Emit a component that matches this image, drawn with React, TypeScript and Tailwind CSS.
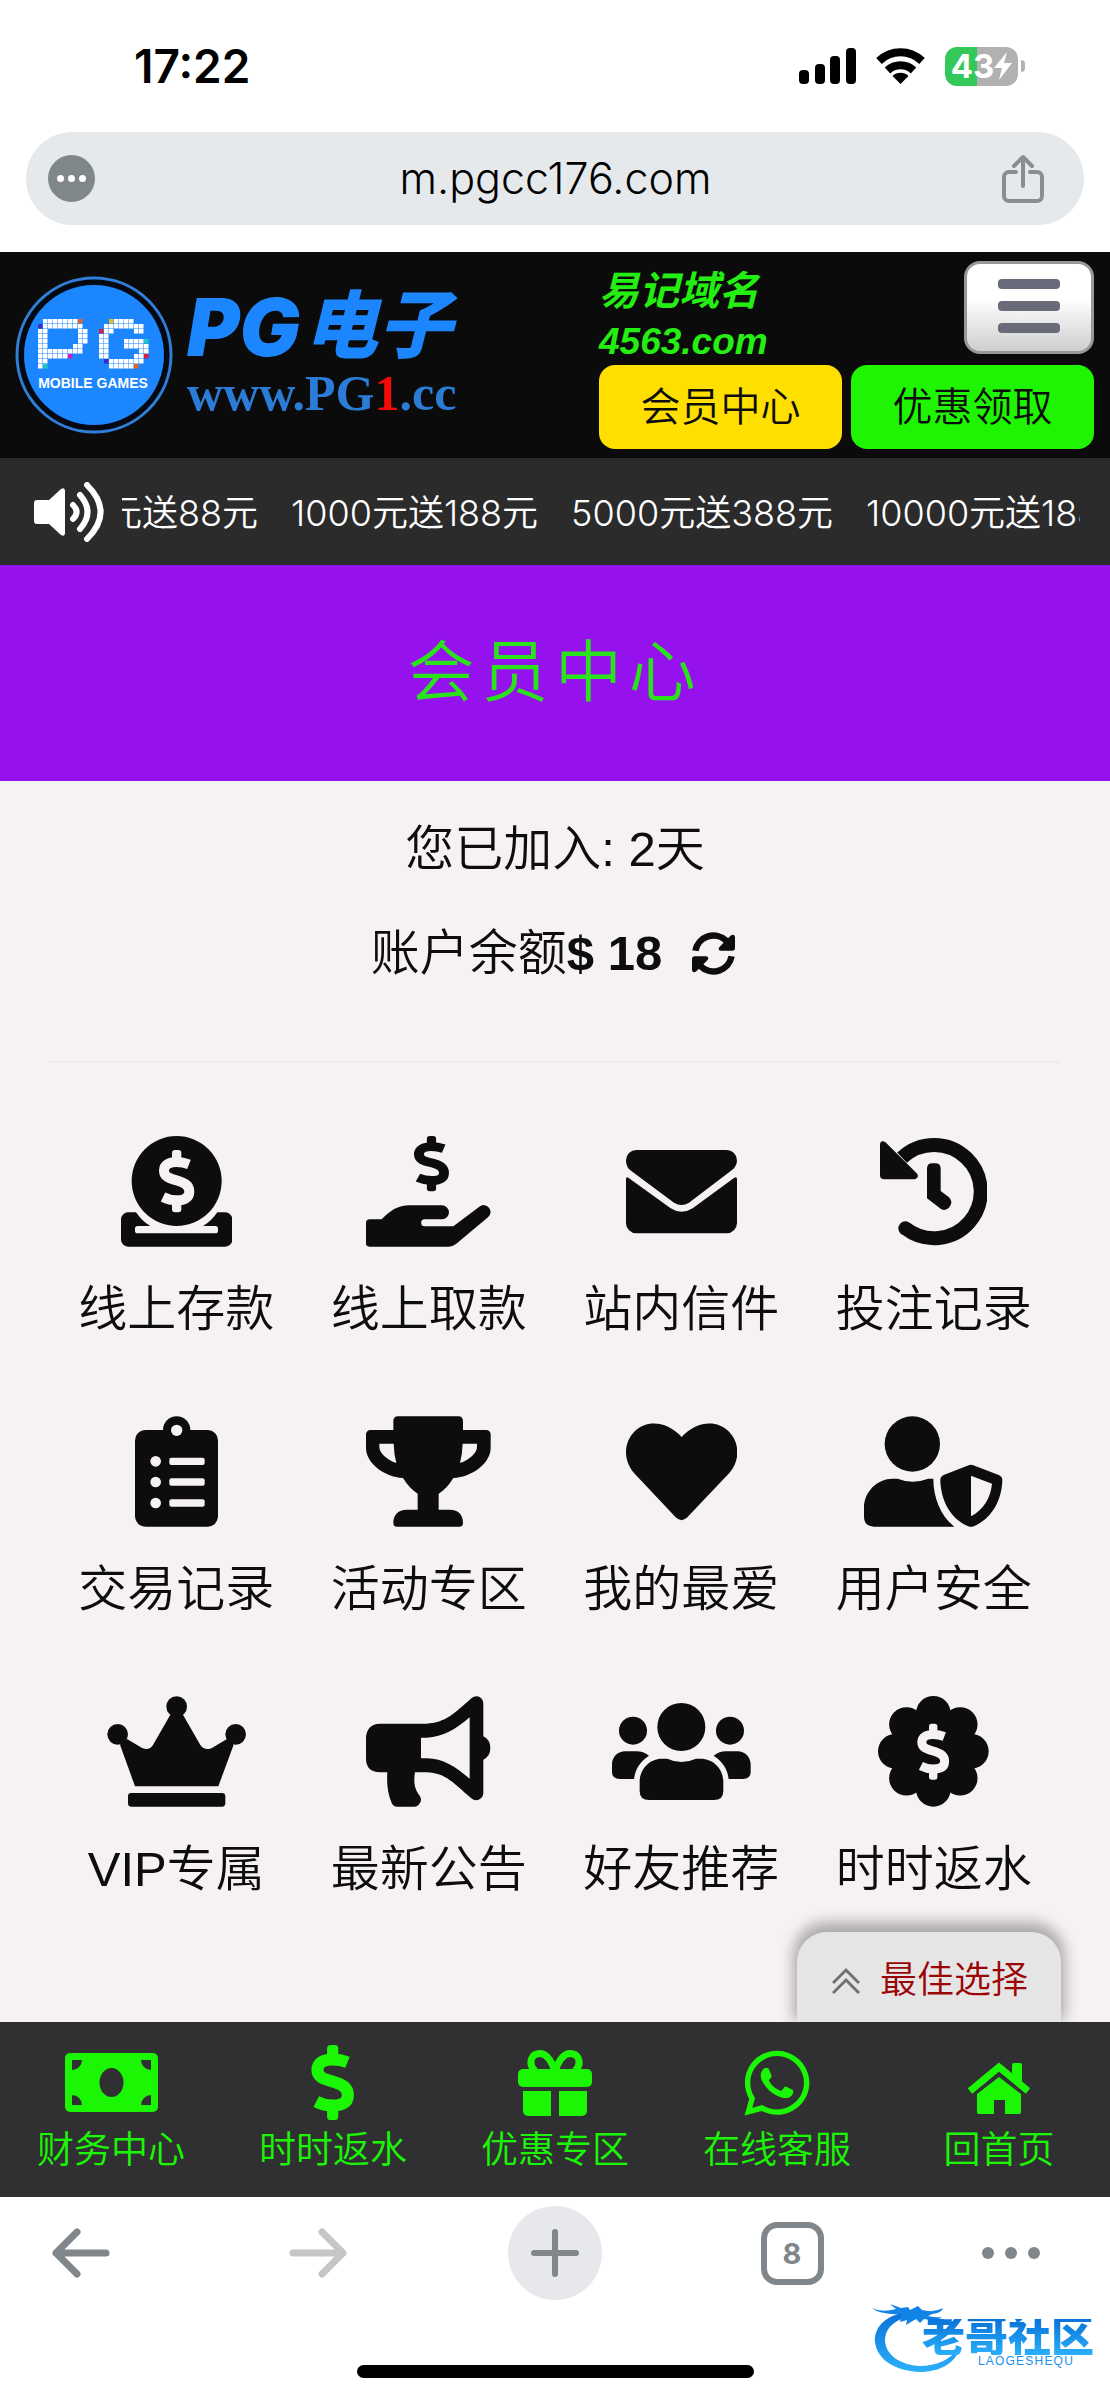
import type { ReactNode } from "react";
import { FaWhatsapp } from "react-icons/fa";

const PAPER = "#f6f2f1";

const P_TILES = [
  ".wwwwwwwo.",
  "bwwwwwwww.",
  "ww......ww",
  "ww......ww",
  "ww......ww",
  "ww.....ww.",
  "wwwwwwwww.",
  "wwwwwwm...",
  "ww........",
  "wc........",
];

const G_TILES = [
  "..ywwww...",
  ".wwwwwwww.",
  "rww....ww.",
  "ww........",
  "ww...wwwwc",
  "ww...wwwww",
  "ww......ww",
  "ww.....wwr",
  ".bwwwwwww.",
  "..wwwwwo..",
];

const TILE_COLORS: Record<string, string> = {
  w: "#ffffff",
  o: "#e0662a",
  b: "#3a2bd0",
  m: "#d01fc0",
  c: "#1fc7c0",
  y: "#e5c02b",
  r: "#d3203f",
};

function Tiles({ rows, x, y }: { rows: string[]; x: number; y: number }) {
  return (
    <g>
      {rows.map((row, r) =>
        row.split("").map((cell, c) =>
          cell === "." ? null : (
            <rect
              key={`${r}-${c}`}
              x={x + c * 5}
              y={y + r * 5}
              width={4.5}
              height={4.5}
              fill={TILE_COLORS[cell]}
            />
          ),
        ),
      )}
    </g>
  );
}

function Emblem() {
  return (
    <svg viewBox="0 0 158 158" className="size-[158px] shrink-0" role="img" aria-label="PG Mobile Games">
      <circle cx="79" cy="79" r="77" fill="#050a12" stroke="#2f7fd8" strokeWidth="3" />
      <circle cx="79" cy="79" r="70" fill="#1c86ff" />
      <Tiles rows={P_TILES} x={23} y={43} />
      <Tiles rows={G_TILES} x={84} y={43} />
      <text
        x="78"
        y="112"
        textAnchor="middle"
        fill="#fff"
        className="font-['Liberation_Sans',sans-serif] text-[14px] font-bold"
      >
        MOBILE GAMES
      </text>
    </svg>
  );
}

// Drawn in a 108 x 187 box
function DollarShape({ color = "currentColor" }: { color?: string }) {
  return (
    <g>
      <path
        d="M91 43C78 38 68 36 54 36C31 36 16 45 16 62C16 80 32 85 54 91C78 98 92 106 92 125C92 143 78 151 54 151C37 151 25 147 13 141"
        fill="none"
        stroke={color}
        strokeWidth="30"
      />
      <rect x="40" y="0" width="28" height="40" rx="9" fill={color} />
      <rect x="40" y="147" width="28" height="40" rx="9" fill={color} />
    </g>
  );
}

function Glyph({ box, children }: { box: string; children: ReactNode }) {
  return (
    <svg viewBox={box} fill="currentColor" className="h-[111px] w-auto" aria-hidden="true">
      {children}
    </svg>
  );
}

const DepositIcon = () => (
  <Glyph box="210 80 334 333">
    <circle cx="377" cy="215" r="135" />
    <g transform="translate(323 122)">
      <DollarShape color={PAPER} />
    </g>
    <path d="M231 309H255C266 326 281 340 298 350H260a8 8 0 0 0-8 8v6a8 8 0 0 0 8 8H493a8 8 0 0 0 8-8v-6a8 8 0 0 0-8-8H456C473 340 488 326 499 309H523a21 21 0 0 1 21 21V391a21 21 0 0 1-21 21H231a21 21 0 0 1-21-21V330a21 21 0 0 1 21-21Z" />
  </Glyph>
);

const WithdrawIcon = () => (
  <Glyph box="948 80 374 333">
    <g transform="translate(1091 80) scale(.99 .885)">
      <DollarShape />
    </g>
    <path d="M948 341Q948 330 959 330H995C1020 305 1042 288 1080 288H1176a21 21 0 0 1 0 42H1124a10.5 10.5 0 0 0 0 21H1210L1288 292a20.5 20.5 0 0 1 26 32L1218 404Q1208 412 1196 412H958Q948 412 948 402Z" />
  </Glyph>
);

const MailIcon = () => (
  <Glyph box="228 80 333 333">
    <path d="M259 122H530A31 31 0 0 1 561 153C561 165 555 176 546 182L417 280Q395 294 372 280L240 182C232 176 228 165 228 153A31 31 0 0 1 259 122Z" />
    <path d="M228 209Q228 201 235 205L362 297Q395 318 428 297L553 205Q561 201 561 209V341a31 31 0 0 1-31 31H259a31 31 0 0 1-31-31Z" />
  </Glyph>
);

const HistoryIcon = () => (
  <Glyph box="990 80 322 333">
    <path d="M1056 145A140 140 0 1 1 1066 357" fill="none" stroke="currentColor" strokeWidth="42" />
    <circle cx="1066" cy="357" r="21" />
    <path d="M990 105Q992 90 1008 100L1100 192Q1110 203 1095 210H1003Q990 210 990 197Z" />
    <path d="M1131 178Q1131 162 1147 162H1156Q1172 162 1172 178V245L1197 264Q1209 276 1200 291Q1190 306 1174 300L1131 267Z" />
  </Glyph>
);

const ClipboardIcon = () => (
  <Glyph box="252 919 249 333">
    <rect x="252" y="961" width="249" height="290" rx="31" />
    <circle cx="377" cy="961" r="41" />
    <g fill={PAPER}>
      <circle cx="377" cy="962" r="17" />
      {[1055, 1117, 1180].map((y) => (
        <g key={y}>
          <circle cx="314" cy={y} r="16" />
          <rect x="355" y={y - 11} width="106" height="22" rx="6" />
        </g>
      ))}
    </g>
  </Glyph>
);

const TrophyIcon = () => (
  <Glyph box="948 919 374 333">
    <path
      fillRule="evenodd"
      d="M1043 920H1226a13 13 0 0 1 13 13V961H1309a13 13 0 0 1 13 13V1015C1322 1060 1268 1102 1210 1105C1197 1127 1183 1142 1166 1152V1200H1200C1225 1200 1239 1215 1239 1240Q1239 1251 1228 1251H1041Q1030 1251 1030 1240C1030 1215 1045 1200 1070 1200H1103V1152C1087 1142 1072 1127 1059 1105C1002 1102 948 1060 948 1015V974A13 13 0 0 1 961 961H1030V933A13 13 0 0 1 1043 920ZM988 1002H1031Q1032 1035 1039 1060C1010 1050 988 1030 988 1011ZM1281 1002H1238Q1237 1035 1230 1060C1259 1050 1281 1030 1281 1011Z"
    />
  </Glyph>
);

const HeartIcon = () => (
  <Glyph box="228 919 333 333">
    <path d="M395 982C350 933 290 930 255 964C220 997 219 1053 252 1090L377 1223Q395 1240 412 1223L538 1090C571 1053 570 997 535 964C500 930 440 933 395 982Z" />
  </Glyph>
);

const UserShieldIcon = () => (
  <Glyph box="944 919 416 333">
    <circle cx="1089" cy="1003" r="83" />
    <path d="M1030 1107H1045Q1089 1125 1137 1107H1152C1152 1165 1175 1220 1215 1251H973Q944 1249 944 1222V1194C944 1145 985 1107 1030 1107Z" />
    <path
      fillRule="evenodd"
      d="M1258 1067Q1265 1064 1272 1067L1348 1096Q1360 1101 1359 1113C1357 1175 1325 1228 1273 1250Q1265 1253 1257 1250C1205 1228 1175 1175 1173 1113Q1172 1101 1183 1096ZM1265 1098L1328 1122C1324 1165 1302 1200 1265 1220Z"
    />
  </Glyph>
);

const CrownIcon = () => (
  <Glyph box="168 109 418 333">
    <circle cx="377" cy="141" r="31" />
    <circle cx="200" cy="224" r="31" />
    <circle cx="554" cy="224" r="31" />
    <path d="M358 165H396L448 256Q457 270 474 268Q480 267 484 264L528 238L548 255L502 380H252L207 255L228 238L272 264Q294 275 306 256Z" />
    <rect x="231" y="400" width="292" height="41" rx="10" />
  </Glyph>
);

const MegaphoneIcon = () => (
  <Glyph box="948 109 374 333">
    <path
      fillRule="evenodd"
      d="M990 192H1130C1185 190 1215 160 1264 116Q1278 105 1290 113Q1300 120 1300 132V230Q1321 240 1321 265Q1321 290 1300 300V402Q1299 412 1290 418Q1276 426 1264 416C1215 375 1190 340 1130 338H1095C1088 380 1100 395 1110 410Q1116 420 1110 430Q1103 441 1094 441H1040Q1030 440 1026 432C1012 400 1010 370 1012 338H990Q948 336 948 297V234Q950 194 990 192ZM1113 234H1130C1180 232 1215 210 1259 173V357C1215 320 1180 297 1130 296H1113Z"
    />
  </Glyph>
);

const SIDE_BODY =
  "M225 275H260Q280 275 297 288C270 305 255 330 252 358H210Q186 358 186 338V315C186 290 205 275 225 275Z";

const FriendsIcon = () => (
  <Glyph box="186 109 416 333">
    <circle cx="394" cy="202" r="72" />
    <circle cx="249" cy="213" r="42" />
    <circle cx="540" cy="213" r="42" />
    <path d="M335 297H352Q394 317 438 297H452C490 297 520 328 520 366V394Q520 421 492 421H297Q269 421 269 394V366C269 328 300 297 335 297Z" />
    <path d={SIDE_BODY} />
    <path d={SIDE_BODY} transform="translate(788 0) scale(-1 1)" />
  </Glyph>
);

const RebateIcon = () => (
  <Glyph box="985 109 333 333">
    <circle cx="1151" cy="275" r="122" />
    {[0, 45, 90, 135, 180, 225, 270, 315].map((deg) => (
      <circle key={deg} cx="1151" cy="161" r="52" transform={`rotate(${deg} 1151 275)`} />
    ))}
    <g transform="translate(1102 192) scale(.9)">
      <DollarShape color={PAPER} />
    </g>
  </Glyph>
);

const MENU = [
  { label: "线上存款", Icon: DepositIcon },
  { label: "线上取款", Icon: WithdrawIcon },
  { label: "站内信件", Icon: MailIcon },
  { label: "投注记录", Icon: HistoryIcon },
  { label: "交易记录", Icon: ClipboardIcon },
  { label: "活动专区", Icon: TrophyIcon },
  { label: "我的最爱", Icon: HeartIcon },
  { label: "用户安全", Icon: UserShieldIcon },
  { label: "VIP专属", Icon: CrownIcon },
  { label: "最新公告", Icon: MegaphoneIcon },
  { label: "好友推荐", Icon: FriendsIcon },
  { label: "时时返水", Icon: RebateIcon },
];

const NOTICES = ["元送88元", "1000元送188元", "5000元送388元", "10000元送1888元"];

const CashIcon = () => (
  <svg viewBox="0 0 93 59" fill="currentColor" className="h-[59px] w-[93px]" aria-hidden="true">
    <path
      fillRule="evenodd"
      d="M5 0H88a5 5 0 0 1 5 5V54a5 5 0 0 1-5 5H5a5 5 0 0 1-5-5V5a5 5 0 0 1 5-5ZM7 7V17A10 10 0 0 0 17 7ZM86 7V17A10 10 0 0 1 76 7ZM7 52V42A10 10 0 0 1 17 52ZM86 52V42A10 10 0 0 0 76 52ZM46.500 15A12 14.500 0 0 0 46.500 44A12 14.500 0 0 0 46.500 15Z"
    />
  </svg>
);

const DollarIcon = () => (
  <svg viewBox="0 0 108 187" className="h-[75px] w-auto" aria-hidden="true">
    <DollarShape />
  </svg>
);

const GiftIcon = () => (
  <svg viewBox="0 0 74 66" fill="currentColor" className="h-[66px] w-[74px]" aria-hidden="true">
    <rect y="19" width="74" height="18" rx="5" />
    <path d="M5 41H33V66H10a5 5 0 0 1-5-5ZM41 41H69V61a5 5 0 0 1-5 5H41Z" />
    <path
      d="M37 21C33 10 28 3.500 22 3.500C14 3.500 11 11 14 17L17 21M37 21C41 10 46 3.500 52 3.500C60 3.500 63 11 60 17L57 21"
      fill="none"
      stroke="currentColor"
      strokeWidth="7"
    />
  </svg>
);

const ChatIcon = () => <FaWhatsapp className="size-[74px]" aria-hidden="true" />;

const HomeIcon = () => (
  <svg viewBox="0 0 64 63" fill="currentColor" className="h-[63px] w-[64px]" aria-hidden="true">
    <path d="M45 14q0-2 2-2h6q2 0 2 2V34L45 26Z" />
    <path d="M3 40L32 16L61 40" fill="none" stroke="currentColor" strokeWidth="7" />
    <path d="M32 26L54 43V61q0 2-2 2H38V49H27V63H12q-2 0-2-2V43Z" />
  </svg>
);

const TABS = [
  { label: "财务中心", Icon: CashIcon },
  { label: "时时返水", Icon: DollarIcon },
  { label: "优惠专区", Icon: GiftIcon },
  { label: "在线客服", Icon: ChatIcon },
  { label: "回首页", Icon: HomeIcon },
];

function StatusBar() {
  return (
    <div className="flex h-[132px] items-center justify-between pr-[85px] pl-[134px] font-['Inter',sans-serif] text-black">
      <time className="text-[46px] leading-none font-semibold">17:22</time>
      <div className="flex items-center gap-5">
        <svg viewBox="0 0 57 36" className="h-9 w-[57px]" aria-label="Signal">
          <rect x="0" y="22" width="10" height="14" rx="4" />
          <rect x="16" y="16" width="10" height="20" rx="4" />
          <rect x="31" y="8" width="10" height="28" rx="4" />
          <rect x="47" y="0" width="10" height="36" rx="4" />
        </svg>
        <svg viewBox="0 0 49 36" className="h-9 w-[49px]" fill="none" stroke="#000" strokeWidth="8" aria-label="Wi-Fi">
          <path d="M3 13A31 31 0 0 1 46 13" />
          <path d="M11.500 22.500A19 19 0 0 1 37.500 22.500" />
          <path d="M24.500 36L16.500 28A11.500 11.500 0 0 1 32.500 28Z" fill="#000" stroke="none" />
        </svg>
        <div className="flex items-center gap-[3px]">
          <div className="flex h-[39px] w-[73px] items-center justify-center rounded-xl bg-linear-to-r from-[#34c759] from-44% to-[#b1b1b1] to-44%">
            <span className="text-[33px] leading-none font-bold text-white">43</span>
            <svg viewBox="0 0 18 28" className="h-7 w-[18px]" fill="#fff" aria-hidden="true">
              <path d="M13 0L0 16H8L5 28L18 11H10Z" />
            </svg>
          </div>
          <span className="h-3 w-1 rounded-r-full bg-[#b1b1b1]" />
        </div>
      </div>
    </div>
  );
}

function AddressBar() {
  return (
    <div className="mx-[26px] mb-[27px] flex h-[93px] items-center justify-between rounded-full bg-[#e5e9ec] pr-10 pl-[22px]">
      <button type="button" aria-label="Page options" className="flex size-[47px] items-center justify-center gap-1 rounded-full bg-[#80878a]">
        <span className="size-[7px] rounded-full bg-white" />
        <span className="size-[7px] rounded-full bg-white" />
        <span className="size-[7px] rounded-full bg-white" />
      </button>
      <span className="pl-[14px] font-['Inter',sans-serif] text-[43px] leading-none text-black">m.pgcc176.com</span>
      <button type="button" aria-label="Share">
        <svg viewBox="0 0 42 50" className="h-[50px] w-[42px]" fill="none" stroke="#8a8e91" strokeWidth="4" strokeLinecap="round" strokeLinejoin="round">
          <path d="M14 18H7a5 5 0 0 0-5 5V42a5 5 0 0 0 5 5H35a5 5 0 0 0 5-5V23a5 5 0 0 0-5-5H28M21 32V4M12 12L21 3L30 12" />
        </svg>
      </button>
    </div>
  );
}

function SiteHeader() {
  return (
    <header className="flex justify-between bg-[#0b0b0b] pt-[9px] pr-4 pb-[9px] pl-[15px]">
      <div className="flex items-center gap-[14px]">
        <Emblem />
        <div className="flex flex-col">
          <p className="flex items-center gap-1 leading-[76px] font-black text-[#1c86ff] italic">
            <span className="font-['Inter',sans-serif] text-[80px]">PG</span>
            <span className="text-[74px]">电子</span>
          </p>
          <p className="font-['Liberation_Serif',serif] text-[50px] leading-[56px] font-bold text-[#2b7cd6]">
            www.PG<span className="text-[#f50a0a]">1</span>.cc
          </p>
        </div>
      </div>

      <div className="flex w-[495px] flex-col gap-[11px]">
        <div className="flex h-[93px] justify-between">
          <p className="pt-[3px] font-bold text-[#24ee12] italic">
            <span className="block text-[40px] leading-[54px]">易记域名</span>
            <span className="block text-[37px] leading-[48px]">4563.com</span>
          </p>
          <button
            type="button"
            aria-label="Menu"
            className="flex w-[130px] flex-col items-center gap-3 rounded-2xl border-[3px] border-[#9a979a] bg-linear-to-b from-white from-40% to-[#cfcfcf] pt-[15px]"
          >
            <span className="h-[10px] w-[62px] rounded-sm bg-[#696a7a]" />
            <span className="h-[10px] w-[62px] rounded-sm bg-[#696a7a]" />
            <span className="h-[10px] w-[62px] rounded-sm bg-[#696a7a]" />
          </button>
        </div>
        <div className="grid grid-cols-2 gap-[9px] text-[40px] text-[#0d0d0d]">
          <button type="button" className="h-[84px] rounded-2xl bg-[#ffdf00]">会员中心</button>
          <button type="button" className="h-[84px] rounded-2xl bg-[#1ff503]">优惠领取</button>
        </div>
      </div>
    </header>
  );
}

function NoticeBar() {
  return (
    <div className="flex h-[107px] items-center gap-[18px] bg-[#2b2b2b] pr-[30px] pl-[34px] text-white">
      <svg viewBox="0 0 70 60" className="h-[60px] w-[70px] shrink-0" fill="#fff" aria-hidden="true">
        <path d="M3 18H15L27 7q4-2 4 2V51q0 4-4 2L15 42H3q-3 0-3-3V21q0-3 3-3Z" />
        <path
          d="M39 23Q46 30 39 37M46 13Q61 30 46 47M53 3Q80 30 53 57"
          fill="none"
          stroke="#fff"
          strokeWidth="6"
          strokeLinecap="round"
        />
      </svg>
      <div className="min-w-0 flex-1 overflow-hidden">
        <div className="-ml-4 flex gap-[33px] pt-[2px] font-['Inter','Noto_Sans_CJK_SC',sans-serif] text-[36px] leading-[56px] whitespace-nowrap">
          {NOTICES.map((notice) => (
            <span key={notice}>{notice}</span>
          ))}
        </div>
      </div>
    </div>
  );
}

function Account() {
  return (
    <main className="relative bg-[#f6f2f1] px-[50px] pt-[34px] pb-[119px] text-[49px] leading-[68px] text-[#0d0d0d]">
      <p className="text-center">您已加入: 2天</p>
      <div className="mt-9 flex items-center justify-center">
        <span>账户余额</span>
        <strong>$ 18</strong>
        <button type="button" aria-label="Refresh balance" className="mr-1 ml-[30px]">
          <svg viewBox="0 0 126 126" className="size-[43px]" fill="currentColor">
            <path d="M10 55A54 54 0 0 1 101 26M116 71A54 54 0 0 1 25 100" fill="none" stroke="currentColor" strokeWidth="19" />
            <path d="M126 15V47Q126 55 118 55H84Q74 52 81 43L113 11Q124 4 126 15ZM0 111V79Q0 71 8 71H42Q52 74 45 83L13 115Q2 122 0 111Z" />
          </svg>
        </button>
      </div>

      <hr className="mt-[74px] mb-[73px] border-t-2 border-[#edeae9]" />

      <div className="grid grid-cols-4 gap-y-[73px]">
        {MENU.map(({ label, Icon }) => (
          <a key={label} href="#" className="flex flex-col items-center gap-7 whitespace-nowrap">
            <Icon />
            <span>{label}</span>
          </a>
        ))}
      </div>

      <button
        type="button"
        className="absolute right-[49px] bottom-0 flex h-[90px] w-[264px] items-center justify-center gap-5 rounded-t-[30px] bg-[#e5e5e5] pt-2 pl-[2px] text-[37px] text-[#9c0505] shadow-[0_-6px_14px_4px_rgba(0,0,0,0.3)]"
      >
        <svg viewBox="0 0 28 28" className="size-7" fill="none" stroke="#707070" strokeWidth="3" aria-hidden="true">
          <path d="M1 16L14 3L27 16M1 26L14 13L27 26" />
        </svg>
        最佳选择
      </button>
    </main>
  );
}

function TabBar() {
  return (
    <nav className="relative grid grid-cols-5 bg-[#303033] pt-[23px] pb-[18px] text-[#1bf605]">
      {TABS.map(({ label, Icon }) => (
        <a key={label} href="#" className="flex flex-col items-center gap-[3px]">
          <span className="flex h-[75px] items-center">
            <Icon />
          </span>
          <span className="text-[37px] leading-[56px]">{label}</span>
        </a>
      ))}
    </nav>
  );
}

function ForumMark() {
  return (
    <div className="absolute right-4 bottom-6 flex h-[76px] w-[222px] flex-col items-end text-[#1a93ee]">
      <svg viewBox="0 0 222 76" className="absolute inset-0" fill="none" aria-hidden="true">
        <defs>
          <linearGradient id="mark" x1="0" y1="0" x2="0" y2="1">
            <stop offset="0" stopColor="#0a72d8" />
            <stop offset="1" stopColor="#2bb0fa" />
          </linearGradient>
        </defs>
        <path
          d="M30 14C12 18 2 29 3 43C5 60 22 72 48 73C68 73 84 64 88 48C78 61 64 67 48 67C28 66 14 56 13 42C13 31 19 23 35 18Z"
          fill="url(#mark)"
        />
        <path
          d="M0 9Q10 14 24 10L18 5L29 9L36 8L38 11L46 7L50 11Q62 14 71 9Q70 14 60 15L56 17Q64 19 70 18L64 22L52 20L48 24L44 20L34 26L35 21L28 23L30 15Q8 16 0 9Z"
          fill="#1283e6"
        />
      </svg>
      <span className="relative mt-5 bg-linear-to-b from-[#0a72d8] to-[#2bb0fa] bg-clip-text text-[43px] leading-9 font-black text-transparent">
        老哥社区
      </span>
      <span className="mr-5 text-[12px] leading-3 tracking-widest">LAOGESHEQU</span>
    </div>
  );
}

function BrowserBar() {
  return (
    <footer className="relative bg-white pt-[9px] pb-[21px] text-[#80868a]">
      <div className="flex justify-between px-[34px]">
        <button type="button" aria-label="Back" className="flex size-[94px] items-center justify-center">
          <svg viewBox="0 0 58 50" className="h-[50px] w-[58px]" fill="none" stroke="currentColor" strokeWidth="7" strokeLinecap="round" strokeLinejoin="round">
            <path d="M54 25H4M25 4L4 25L25 46" />
          </svg>
        </button>
        <button type="button" aria-label="Forward" disabled className="flex size-[94px] items-center justify-center text-[#c6c6c6]">
          <svg viewBox="0 0 58 50" className="h-[50px] w-[58px]" fill="none" stroke="currentColor" strokeWidth="7" strokeLinecap="round" strokeLinejoin="round">
            <path d="M4 25H54M33 4L54 25L33 46" />
          </svg>
        </button>
        <button type="button" aria-label="New tab" className="flex size-[94px] items-center justify-center rounded-full bg-[#e7e8eb]">
          <svg viewBox="0 0 48 48" className="size-12" fill="none" stroke="currentColor" strokeWidth="6" strokeLinecap="round">
            <path d="M24 3V45M3 24H45" />
          </svg>
        </button>
        <button type="button" aria-label="Open tabs" className="flex size-[94px] items-center justify-center">
          <span className="flex size-[63px] items-center justify-center rounded-2xl border-[6px] border-current font-['Inter',sans-serif] text-[29px] leading-none font-bold">
            8
          </span>
        </button>
        <button type="button" aria-label="More" className="flex size-[94px] items-center gap-[11px]">
          <span className="size-3 rounded-full bg-current" />
          <span className="size-3 rounded-full bg-current" />
          <span className="size-3 rounded-full bg-current" />
        </button>
      </div>
      <div className="mx-auto mt-[65px] h-[13px] w-[397px] rounded-full bg-black" />
      <ForumMark />
    </footer>
  );
}

export default function App() {
  return (
    <div className="w-full bg-white font-['Liberation_Sans','Noto_Sans_CJK_SC',sans-serif] font-[350]">
      <StatusBar />
      <AddressBar />
      <SiteHeader />
      <NoticeBar />
      <div className="bg-[#9512ef] pt-[68px] pb-[68px] text-center">
        <h1 className="text-[67px] leading-[80px] tracking-widest text-[#2be31a]">会员中心</h1>
      </div>
      <Account />
      <TabBar />
      <BrowserBar />
    </div>
  );
}
